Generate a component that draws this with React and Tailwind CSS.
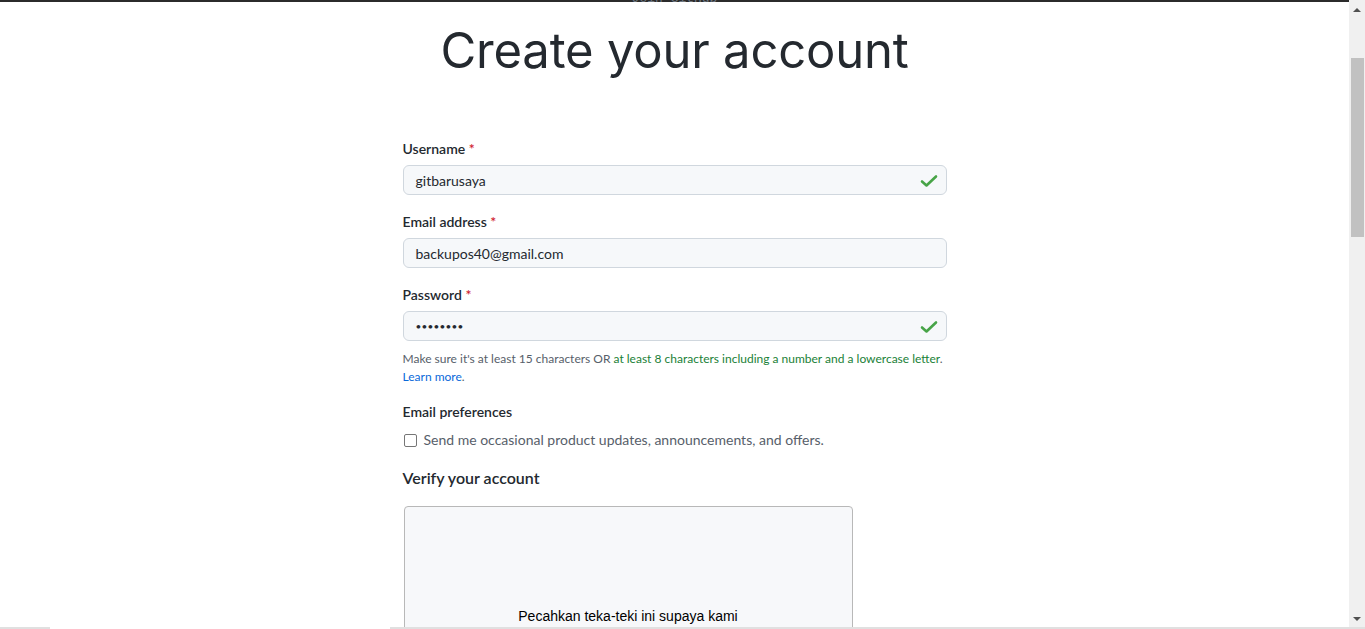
export default function App() {
  const check = (
    <svg width="18" height="14" viewBox="0 0 18 14" className="absolute right-[8px] top-[8px]">
      <path d="M2 7.5 L6.5 11.5 L16 2.5" fill="none" stroke="#47a447" strokeWidth="2.6" strokeLinecap="round" strokeLinejoin="round" />
    </svg>
  );

  return (
    <div className="h-[629px] w-[1365px] overflow-hidden flex flex-col bg-white" style={{ fontFamily: 'Lato, sans-serif' }}>
      <div className="flex flex-1 min-h-0">
        {/* page */}
        <div className="flex-1 flex flex-col min-w-0">
          <div className="h-[2px] shrink-0 bg-[#2b2b2b]" />
          <div className="relative h-0">
            <div className="absolute left-0 right-0 -top-[11px] text-center text-[13px] leading-[16px] text-[#6e7781]" style={{ fontFamily: '"Liberation Mono", monospace' }}>
              Join GitHub
            </div>
          </div>
          <h1 className="text-center text-[49px] leading-[58px] mt-[20px] text-[#24292f] tracking-[-0.2px]" style={{ fontFamily: 'Inter, sans-serif' }}>
            Create your account
          </h1>

          <div className="w-[544px] mx-auto mt-[58px] text-[#24292f]">
            <Field label="Username" value="gitbarusaya" icon={check} />
            <Field label="Email address" value="backupos40@gmail.com" className="mt-[16px]" />
            <Field label="Password" value="••••••••" icon={check} className="mt-[16px]" password />

            <p className="mt-[9px] text-[12px] leading-[18px] text-[#57606a]">
              Make sure it's at least 15 characters OR{" "}
              <span className="text-[#1a7f37]">at least 8 characters including a number and a lowercase letter</span>.
              <br />
              <span className="text-[#0969da]">Learn more</span>.
            </p>

            <div className="mt-[15px] text-[14px] leading-[21px] font-semibold">Email preferences</div>
            <label className="mt-[8px] flex items-center gap-[7px] text-[14px] leading-[20px] text-[#57606a]">
              <span className="w-[13px] h-[13px] border border-[#767676] rounded-[2px] bg-white ml-[1px]" />
              Send me occasional product updates, announcements, and offers.
            </label>

            <div className="mt-[16px] text-[16px] leading-[24px] font-semibold">Verify your account</div>
            <div className="mt-[16px] ml-[1px] w-[449px] h-[160px] border border-[#b8b8b8] rounded-[4px] bg-[#f7f8fa] flex flex-col items-center">
              <div className="mt-[100px] text-[14px] leading-[18px] text-black" style={{ fontFamily: '"Liberation Sans", Arial, sans-serif' }}>
                Pecahkan teka-teki ini supaya kami
              </div>
            </div>
          </div>
        </div>

        {/* scrollbar */}
        <div className="w-[16px] bg-[#f0f0f0] flex flex-col items-center">
          <div className="h-[17px] flex items-center justify-center">
            <div className="w-0 h-0 border-l-[4px] border-r-[4px] border-b-[4px] border-l-transparent border-r-transparent border-b-[#505050] mt-[2px]" />
          </div>
          <div className="mt-[41px] w-[13px] h-[179px] bg-[#c1c1c1]" />
          <div className="flex-1" />
          <div className="h-[17px] flex items-center justify-center">
            <div className="w-0 h-0 border-l-[4px] border-r-[4px] border-t-[4px] border-l-transparent border-r-transparent border-t-[#505050]" />
          </div>
        </div>
      </div>
      {/* bottom strip */}
      <div className="h-[2px] shrink-0 flex bg-[#e0e0e0]">
        <div className="w-[50px]" />
        <div className="w-[340px] bg-white" />
      </div>
    </div>
  );
}

function Field({ label, value, icon, className = "", password }) {
  return (
    <div className={className}>
      <div className="text-[14px] leading-[21px] font-semibold">
        {label} <span className="text-[#cf222e]">*</span>
      </div>
      <div className="relative mt-[6px] h-[30px] rounded-[6px] border border-[#d0d7de] bg-[#f6f8fa] flex items-center px-[12px]">
        <span className={password ? "text-[10px] tracking-[0.2px] text-[#24292f]" : "text-[14px] text-[#24292f]"}>{value}</span>
        {icon}
      </div>
    </div>
  );
}
